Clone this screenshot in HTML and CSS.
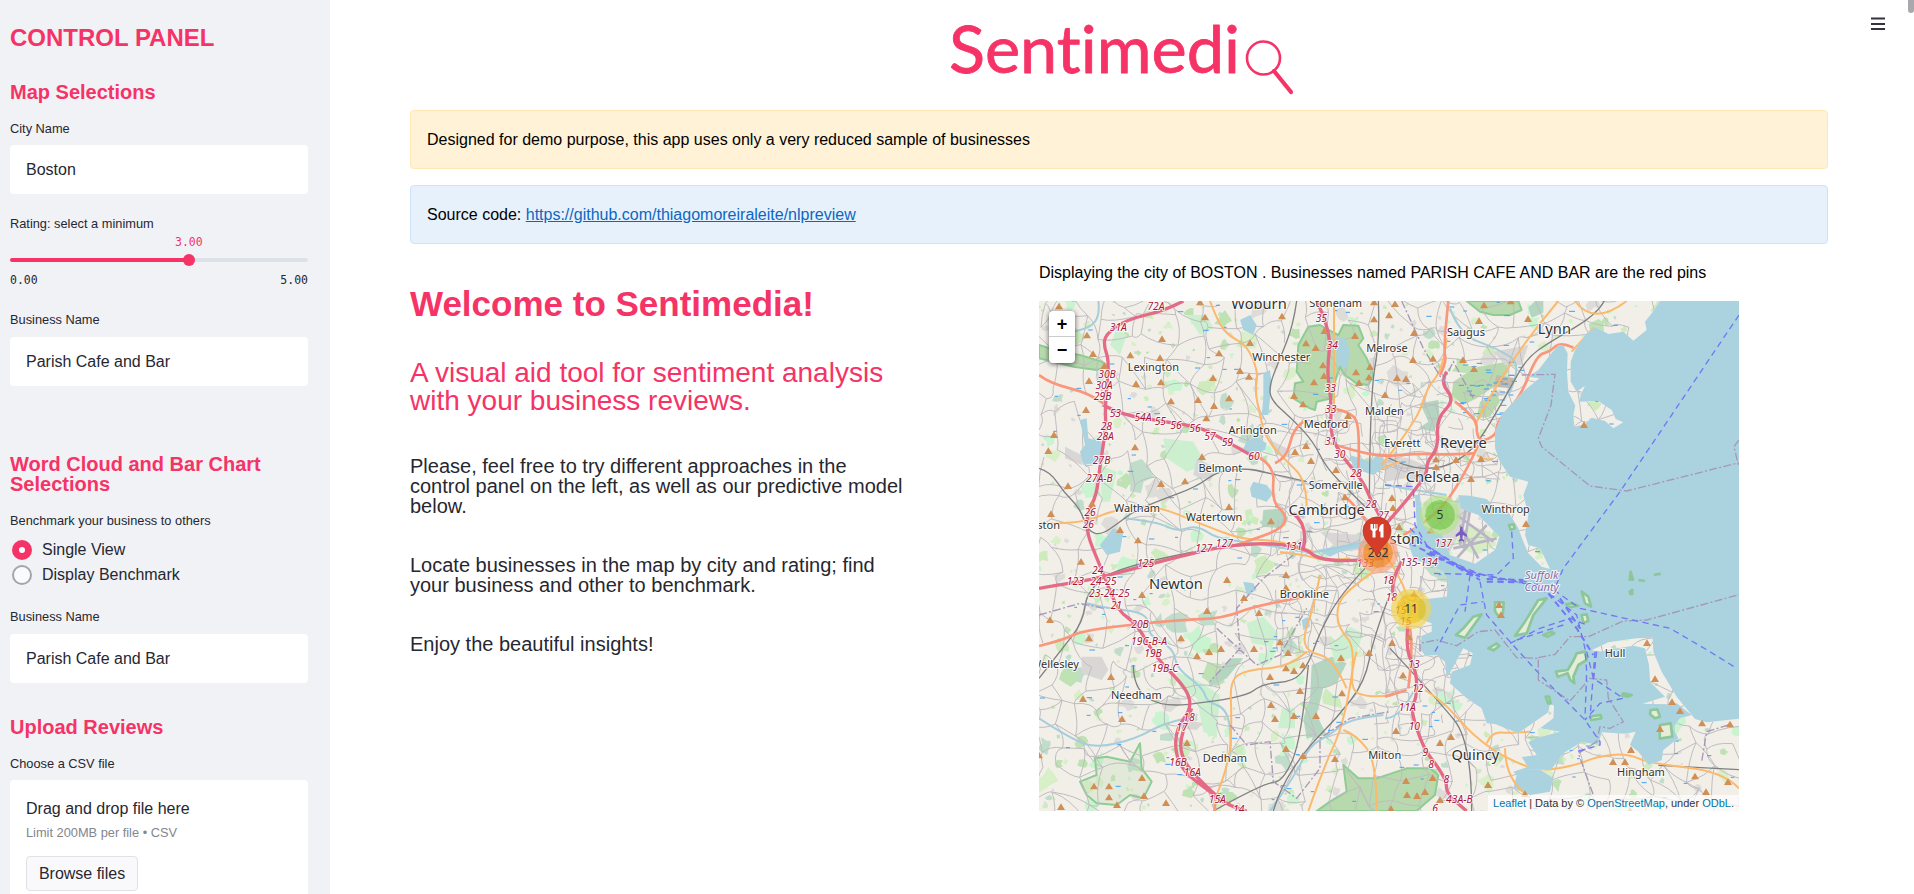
FILE: index.html
```html
<!DOCTYPE html>
<html lang="en">
<head>
<meta charset="utf-8">
<title>Sentimedia</title>
<link rel="stylesheet" href="styles.css">
</head>
<body>
<div class="app">
  <aside class="sidebar">
    <h1 class="panel-title">CONTROL PANEL</h1>
    <h3 class="section section-map">Map Selections</h3>
    <label class="label">City Name</label>
    <div class="select">Boston</div>
    <label class="label label-rating">Rating: select a minimum</label>
    <div class="slider">
      <div class="slider-value"><span>3.00</span></div>
      <div class="track"><div class="thumb"></div></div>
      <div class="ticks"><span>0.00</span><span>5.00</span></div>
    </div>
    <label class="label label-business">Business Name</label>
    <div class="select">Parish Cafe and Bar</div>
    <h3 class="section section-cloud">Word Cloud and Bar Chart Selections</h3>
    <label class="label">Benchmark your business to others</label>
    <div class="radios">
      <div class="radio"><i class="dot dot-on"></i>Single View</div>
      <div class="radio"><i class="dot"></i>Display Benchmark</div>
    </div>
    <label class="label label-other">Business Name</label>
    <div class="select">Parish Cafe and Bar</div>
    <h3 class="section section-upload">Upload Reviews</h3>
    <label class="label">Choose a CSV file</label>
    <div class="dropzone">
      <div class="drop-main">Drag and drop file here</div>
      <div class="drop-limit">Limit 200MB per file • CSV</div>
      <button class="browse">Browse files</button>
    </div>
  </aside>

  <main class="main">
    <div class="logo">
      <svg width="350" height="80" viewBox="0 0 350 80">
        <text class="logo-text" x="5" y="53" textLength="291" lengthAdjust="spacingAndGlyphs">Sentimedi</text>
        <circle cx="319.500" cy="38" r="16.500" fill="none" stroke="#f63366" stroke-width="2.600"/>
        <path d="M330 51l17 21" stroke="#f63366" stroke-width="4.200" stroke-linecap="round"/>
      </svg>
    </div>
    <div class="alert alert-warning">Designed for demo purpose, this app uses only a very reduced sample of businesses</div>
    <div class="alert alert-info">Source code:&nbsp;<a href="#">https://github.com/thiagomoreiraleite/nlpreview</a></div>
    <div class="columns">
      <section class="intro">
        <h1 class="welcome">Welcome to Sentimedia!</h1>
        <h2 class="tagline">A visual aid tool for sentiment analysis<br>with your business reviews.</h2>
        <p class="para">Please, feel free to try different approaches in the<br>control panel on the left, as well as our predictive model<br>below.</p>
        <p class="para">Locate businesses in the map by city and rating; find<br>your business and other to benchmark.</p>
        <p class="para">Enjoy the beautiful insights!</p>
      </section>
      <section class="map-col">
        <div class="map-caption">Displaying the city of BOSTON . Businesses named PARISH CAFE AND BAR are the red pins</div>
        <div class="map">
          <svg class="tiles" viewBox="27 18 2100 1530" width="700" height="510">
            <defs>
              <clipPath id="land-clip"><use href="#land"/></clipPath>
            </defs>
            <rect x="27" y="18" width="2100" height="1530" fill="#aad3df"/>
            <path id="land" fill="#f2efe9" d="M20 10H1895L1865 55 1845 80 1850 105 1810 137 1780 110 1735 117 1695 95 1665 120 1635 165 1622 200V260L1640 290 1665 272 1655 295 1645 320 1705 318 1745 345 1757 372 1780 382 1750 400 1725 378 1685 368 1665 388 1633 395 1630 360 1636 332 1615 290 1611 230 1613 175 1600 152 1585 150 1560 180 1525 225 1495 245 1528 250 1485 285 1450 320 1415 360 1395 410V460L1410 500 1440 545 1495 560 1480 600 1495 660 1485 720 1495 750 1530 760 1560 822 1535 815 1495 775 1478 735 1465 700 1435 650 1400 640 1370 612 1320 602 1285 600 1290 640 1345 660 1408 725 1395 765 1335 806 1260 780 1238 720 1180 690 1170 600 1155 600 1160 690 1130 730 1150 790 1240 830 1255 860 1250 905 1190 912 1165 912 1165 970 1205 985 1205 1010 1175 1022 1170 1060 1185 1082 1220 1080 1245 1100 1250 1150 1270 1115 1300 1060 1328 1075 1320 1110 1265 1130 1260 1165 1310 1210 1355 1240 1370 1285 1395 1287 1465 1315 1500 1290 1555 1252 1560 1226 1572 1232 1570 1270 1530 1300 1590 1310 1515 1330 1495 1342 1520 1380 1475 1386 1500 1425 1565 1422 1600 1375 1655 1341 1705 1350 1715 1312 1785 1316 1817 1310 1800 1350 1825 1370 1855 1410 1895 1396 1900 1365 1945 1330 1930 1300 1950 1270 1985 1260 1940 1225 1915 1228 1838 1226 1890 1210 1905 1205 1860 1160 1857 1110 1845 1060 1810 1052 1750 1062 1700 1072 1685 1066 1735 1042 1820 1030 1868 1028 1870 1070 1895 1130 1940 1205 1995 1272 2030 1282 2135 1270V1560H20Z"/>
            <g id="fabric" clip-path="url(#land-clip)">
              <g id="greens"></g>
              <!-- parks and woods -->
              <g fill="#b8d9ad" stroke="#8fcb95" stroke-width="6" stroke-linejoin="round">
                <path d="M835 95L870 90 905 110 925 120 940 90 985 92 1000 130 985 150 1010 190 1030 240 1015 270 980 265 945 240 930 215 915 260 905 310 860 320 855 345 840 340 790 310 795 265 820 260 800 230 805 150Z"/>
                <path d="M27 150L90 170 150 180 215 200 235 215 200 225 130 215 27 190Z"/>
                <path d="M1310 18H1465L1475 45 1440 60 1390 60 1350 50Z"/>
                <path stroke="none" d="M1270 260L1300 240 1345 215 1430 200 1435 230 1400 270 1340 310 1300 330 1265 300Z"/>
                <path stroke="none" d="M1350 320L1400 290 1410 320 1380 365 1340 370Z"/>
                <path fill-opacity=".25" d="M150 1460L200 1440 195 1390 230 1385 300 1400 330 1345 335 1420 365 1460 340 1510 300 1500 260 1530 200 1525 170 1500Z"/>
                <path d="M860 1548L900 1520 950 1490 940 1410 985 1450 1040 1450 1130 1420 1200 1420 1225 1440 1215 1500 1180 1530 1160 1548Z"/>
              </g>
              <g fill="#b4d5c0">
                <path d="M845 1110l60-25 45 20-30 60-40 15-20 80 30 60-60 10-10-60 20-60zM535 1160l70-70 35 0-50 60-50 25zM700 645l55-5 20 30-20 30-60-5zM1170 325l55-10 5 60-20 35-45-10 30-20zM1515 18h25l0 35-35 15-10-30z"/>
              </g>
              <g fill="#ccf0cf">
                <path d="M650 985l50-20 45 50-20 40-60-10zM900 1050l60-55 40 20-25 70-60 20zM755 1240l40 0 0 60-50 0zM260 100l30 20-20 60-30-30zM470 60l60 0 20 40-40 20zM400 430l90 10 40 70-60 20-60-40zM210 510l50 20-20 90-25 0zM440 1130l70 30 60 40-10 130-40-20-20-100-50-30zM1270 900l60 20 0 30-60-20z"/>
              </g>
              <g fill="#d9d7d6">
                <path d="M155 1085l60 0 20 40-20 30-60-20zM105 455l60 30-10 25-50-20zM500 490l60 30-20 40-50-20zM710 430l60 30 20 30-50-10zM1390 170l105-20-20 60-50 0zM1065 480l70 10 60 25-10 55-60-20-60 10zM870 710l120 10 60 40-120 10zM470 1275l50 10-20 20-50-5zM1180 620l80 0 60 30-60 120-50-40z"/>
                <path fill="#d8edc4" d="M1320 690l60 20 20 40-60 30-50-20zM1340 630l60 20-30 10z"/>
                <path fill="#c8b9a5" d="M1400 240l55 10-10 30-55-5z"/>
              </g>
              <g id="streets" fill="none" stroke="#bfbcc0" stroke-width="3"></g>
              <g id="marsh" stroke="#41a0f5" stroke-width="3"></g>
              <!-- lakes and rivers -->
              <g fill="#aad3df">
                <path d="M150 375l20-5 5 60 40 10 5 60-60 10-10-40 15-20zM630 75l30-15 20 30-10 30-30-15zM650 440l30-15 30 20-5 20-50 15-20-10zM660 580l10-20 40 10 20 25-20 25-45-15zM700 235l20-10 5 40-10 95-20 0 5-50zM905 130l40 0 15 40-10 50-30-10 0-40-25-10zM640 860l30 5 10 20-30 15zM815 975l20-10 5 30-20 10zM250 700l30 10-10 60-40 10-20-30zM1450 1430l60-20 60 40-10 40-60 10-50-20 10-40z"/>
                <path d="M960 480l60 20 30-30 20 40-40 30-60-20zM860 765l140-25 60-10 0 15-130 25-30 15z"/>
              </g>
              <g class="smooth" fill="none" stroke="#a5cddb" stroke-width="6" stroke-linejoin="round">
                <path d="M205 18L210 60 180 100 130 110M280 670L380 680 440 710 500 690 560 730 640 740 740 755 840 775 920 760 1050 730M27 1270L120 1330 200 1360 320 1330 400 1285 470 1270M170 925L230 940 330 950 360 980 355 1020 430 1060 440 1120 520 1180 530 1220 590 1240 605 1330 600 1400M720 1548L790 1450 840 1350 900 1320 960 1270 1060 1260M1260 40L1290 120 1400 160 1480 210 1435 300M1065 570L1180 590 1250 600M1065 1270L1110 1270 1150 1190"/>
              </g>
              <!-- railways -->
              <g class="smooth" fill="none" stroke="#808080" stroke-width="4">
                <path d="M800 18L790 90 750 190 718 270 722 315 790 375 850 440 890 520 960 590 1010 640M27 520L60 530 100 590 150 640 175 710 215 720 270 680 310 650 380 620 500 575 560 530 640 520 700 530 830 560M460 780L600 748 740 745M1723 18L1700 60 1560 140 1490 190 1440 280 1360 420 1310 480 1240 520 1130 520 1060 480"/>
                <path d="M490 771L260 815 170 890 160 980 90 1070 27 1150M310 1110V1246L640 1210 700 1165 790 1160 835 1110 870 1010 930 900 1005 820M1075 910L1030 1030 1005 1160 920 1270 830 1360 750 1480 730 1548M550 1548L700 1465 760 1460 815 1330 835 1110M1080 1060L1220 1210 1325 1340V1548M1885 1411L2127 1424M1045 18L1050 130 1020 300 1018 620"/>
              </g>
              <!-- secondary roads -->
              <g class="smooth" fill="none" stroke="#fcb96b" stroke-width="6" stroke-linejoin="round">
                <path d="M540 18L565 85 600 125 650 150 685 230 675 290 690 360 705 425 760 490 830 555V640M27 685L150 688 250 645 370 628 520 690 640 735 750 735 850 770M912 18V340M1055 510L1160 380 1190 280 1240 220 1250 130M1335 390L1430 200 1585 18M1635 18L1690 95 1790 18M1055 520L1110 500M1625 170L1690 98M1340 480L1370 500 1390 490"/>
                <path d="M750 771L830 780 890 800 960 790M1030 830L960 880 920 930 925 1000 980 1060 940 1290 880 1420 835 1548M980 1070L950 1180 1020 1210 1090 1200M870 840L850 940 820 1020 830 1070 910 1090 950 1180M830 1070L780 1115 650 1125 600 1155 605 1270 600 1400 560 1500M940 1305L980 1320 1040 1400V1548M1185 1185L1240 1220 1300 1290 1360 1345 1430 1390 1530 1430 1640 1410 1700 1385 1790 1375 1860 1405 2080 1430 2127 1480M1370 1345L1385 1310 1440 1315 1500 1310M1425 1360V1450L1490 1500M1065 780L1110 840 1130 900"/>
              </g>
              <g class="smooth" fill="none" stroke="#fa967a" stroke-width="8" stroke-linejoin="round">
                <path d="M27 240L60 265 180 295 220 325M670 480L735 505 725 620 770 660 760 700 650 740 620 750M735 505L770 490 790 400 820 380M905 340L965 350 990 400 985 520M900 445L980 470 1065 485 1170 475 1240 480 1330 475M1255 18L1240 160 1250 200 1230 240M1275 320L1340 370V420L1355 440 1400 420 1400 380 1470 310 1520 180 1560 170 1590 140 1630 158M1345 450L1280 590 1180 690 1120 720M940 600L1000 650 1060 760"/>
                <path d="M27 1053L100 1035 160 1005 440 975 580 970 680 930 830 905M1065 1205L1130 1185M1140 1000L1150 1060 1135 1180M555 1500V1548"/>
              </g>
              <!-- motorways -->
              <g class="smooth" fill="none" stroke="#e56a86" stroke-width="10" stroke-linejoin="round">
                <path d="M460 18L410 45 285 75 225 120 222 155 238 200 225 330 228 400 210 510 200 600 170 660 172 720 205 800 225 850 265 950 320 985 375 1085 470 1180 485 1240 440 1300 435 1370 460 1430 540 1490 600 1535 650 1548M220 330L270 360 440 385 520 400 600 445 680 490M27 880L150 860 220 845 500 771 620 748 740 745 830 762 860 790 950 800 1060 790M860 18L905 110 890 230 905 320 900 420 940 490 1000 560 1020 610 1070 700 1070 790M790 655L835 690 820 760M1250 230L1230 260 1275 315 1220 370 1225 460 1190 500 1190 550 1065 690M1135 970L1125 1060 1160 1130 1160 1210 1140 1240 1180 1360 1220 1410 1250 1460V1500L1310 1548M1115 800L1080 860 1090 900M485 1240L455 1310 450 1380 500 1450 580 1520"/>
              </g>
              <g fill="none" stroke="#b9b5c6" stroke-width="8"><path d="M1325 620L1300 760M1310 620L1290 750M1280 660L1390 740M1280 790L1370 690M1290 690L1345 790M1270 760L1400 730"/></g>
            </g>
            <!-- harbour islands -->
            <g fill="#e6ecd8" stroke="#8cc79a" stroke-width="8" stroke-linejoin="round">
              <path d="M1355 958L1330 965 1300 1000 1278 1020 1305 1028 1325 1000ZM1550 910L1525 915 1485 980 1455 1022 1490 1015 1510 960ZM1655 890L1665 925 1683 935 1675 905ZM1608 928l15 8 22-4-20-7zM1655 960l15-2 5 20-15 5zM1540 1020l25-10 8 5-20 10zM1375 1060l25-15 8 8-18 13zM1640 1075l25-5 5 25-25 15-15 35 3 20-12-10-8-20-30 10-5-15 35-5 18-30zM1395 922l26 0-2 32-12 12-12-17zM1780 1195l25 5-10 5-20-3zM1680 1265l32-5 2 10-30 5zM1547 1205l10 0 5 20-8 0zM1862 1245l20-2 8 22-15 5-15-12zM1890 1290l32-5 5 40-38 6zM1802 830l3 12 4 12-10 0zM1825 855l20 3M1872 840l20-4M1799 890l8-5 0 12-6 0zM1437 690l14-2 3 12-12 4z"/>
            </g>
            <g fill="none" stroke="#a796b8" stroke-width="4" stroke-dasharray="24 7 6 7">
              <path d="M1475 240L1575 238 1563 330 1525 430 1535 455 1680 573 1790 588 2127 503M2127 435L2112 455 2125 510"/>
              <path d="M1170 1070V1045L1220 1035 1280 1052 1345 1010 1395 1005 1460 1088 1525 1090V1155L1620 1218 1680 1150 1730 1155 1735 1210 1780 1280 1740 1300 1710 1295 1700 1340 1645 1375 1690 1500M1525 1088L1575 1078 1620 1025 1675 1025 1780 978 1850 975 2127 899"/>
              <path d="M1115 18L1180 160 1240 260 1270 200 1330 310M27 960L150 925 220 940M790 780L700 850 620 940 630 1060 540 1160M560 1000L680 1110 750 1080 830 940M600 1290L650 1350 720 1340 730 1460 800 1510 870 1420V1330L960 1270 1080 1250M2095 1290L2030 1310 2015 1400"/>
            </g>
            <g fill="none" stroke="#7277f5" stroke-width="4" stroke-dasharray="19 13">
              <path d="M2127 60L1770 590 1600 820 1570 890M1065 570L1150 575 1155 690 1190 750 1260 800 1370 845 1490 860 1570 905 1640 960 1665 1060 1670 1130 1665 1270M1140 700L1210 770 1320 830 1480 865M1350 860L1370 960 1440 1040 1540 1150 1665 1275 1710 1340V1350L1640 1370M1480 865L1550 870 1650 940 1920 1000 2040 1070 2120 1120M1215 1070L1290 930 1360 920M1320 840L1305 950M1440 1045L1530 1000 1620 970 1670 990M1460 1035L1600 990M1670 1070L1690 1150 1780 1210 1710 1225 1665 1275M1445 710L1450 790 1400 840 1200 835M1700 1070L1690 1160M1695 1070L1680 1270"/>
              <path stroke-width="6" d="M1140 745L1300 825M1160 735L1330 840M1190 775L1350 845M1370 852L1480 855M1370 860L1480 862M1555 895L1640 1000 1690 1080M1590 910L1650 1000M1200 770L1350 855"/>
            </g>
            <path d="M1291 695h6l2 14 12 10v7l-13-6-1 11 5 5v4l-8-3-8 3v-4l5-5-1-11-13 6v-7l12-10z" fill="#7a5cc0"/>
            <g id="peaks" fill="#d08f55"></g>
            <g class="town">
              <text x="370" y="227">Lexington</text><text x="754" y="197">Winchester</text><text x="668" y="416">Arlington</text><text x="571" y="530">Belmont</text><text x="888" y="398">Medford</text><text x="917" y="581">Somerville</text><text x="321" y="650">Waltham</text><text x="552" y="678">Watertown</text><text x="917" y="35">Stoneham</text><text x="1071" y="172">Melrose</text><text x="1063" y="359">Malden</text><text x="1308" y="124">Saugus</text><text x="1117" y="457">Everett</text><text x="1427" y="655">Winthrop</text><text x="56" y="703">ston</text><text x="823" y="910">Brookline</text><text x="75" y="1120">Wellesley</text><text x="319" y="1213">Needham</text><text x="585" y="1400">Dedham</text><text x="1064" y="1391">Milton</text><text x="1755" y="1085">Hull</text><text x="1833" y="1442">Hingham</text>
            </g>
            <g class="city">
              <text x="687" y="42">Woburn</text><text x="1573" y="117">Lynn</text><text x="1300" y="460">Revere</text><text x="1208" y="560">Chelsea</text><text x="890" y="660">Cambridge</text><text x="1124" y="746">ston</text><text x="438" y="882">Newton</text><text x="1336" y="1396">Quincy</text>
            </g>
            <g class="exit" id="exits"></g>
            <g class="county"><text x="1535" y="852">Suffolk</text><text x="1535" y="887">County</text></g>
          </svg>
          <div class="zoom"><span>+</span><span>−</span></div>
          <div class="cluster green">5</div>
          <div class="cluster yellow">11</div>
          <div class="cluster orange">262</div>
          <svg class="pin" width="30" height="42" viewBox="0 0 30 42">
            <path d="M15 40C11 30 1 25 1 15A14 14 0 0 1 29 15C29 25 19 30 15 40Z" fill="#d33d2a" stroke="#b83222" stroke-width=".8"/>
            <path d="M8.500 8v5.500l2 1.500V21.500h3V15l2-1.500V8h-1v4.500h-1V8h-1.600v4.500h-1V8zM21.500 8c-3 0-4.500 2-4.500 7.500h1.500v6h3z" fill="#fff"/>
          </svg>
          <div class="credit"><a>Leaflet</a> | Data by © <a>OpenStreetMap</a>, under <a>ODbL</a>.</div>
        </div>
      </section>
    </div>
    <svg class="menu" width="14" height="14" viewBox="0 0 14 14"><path d="M0 1.500h14M0 7h14M0 12h14" stroke="#35333f" stroke-width="1.800"/></svg>
    <div class="scroll-thumb"></div>
  </main>
</div>
<script src="map.js"></script>
</body>
</html>
```

FILE: styles.css
```css
* { box-sizing: border-box; }
body { margin: 0; font-family: "Liberation Sans", Arial, sans-serif; font-size: 16px; color: #262730; background: #fff; }
h1, h2, h3, p { margin: 0; }
.app { display: flex; height: 894px; overflow: hidden; }

.sidebar { width: 330px; flex: none; height: 894px; overflow: hidden; background: #f0f2f6; padding: 26px 22px 0 10px; display: flex; flex-direction: column; }
.sidebar > * { flex: none; }
.panel-title { font-size: 24px; line-height: 24px; color: #f63366; }
.section { font-size: 20px; line-height: 20px; color: #f63366; margin-bottom: 17px; }
.section-map { margin-top: 32px; }
.section-cloud { margin-top: 68px; }
.section-upload { margin-top: 34px; }
.label { font-size: 12.8px; line-height: 20px; height: 20px; margin-bottom: 7px; }
.section + .label { margin-bottom: 6px; }
.label-rating { margin-top: 20px; margin-bottom: 0; }
.label-business { margin-top: 22px; }
.label-other { margin-top: 20px; }
.select { height: 49px; border-radius: 4px; background: #fff; padding: 0 16px; line-height: 49px; }
.slider { height: 54px; font-family: "DejaVu Sans Mono", monospace; font-size: 11.5px; line-height: 14px; display: flex; flex-direction: column; }
.slider-value { padding-left: 165px; height: 24px; padding-top: 1px; color: #f63366; }
.track { height: 4px; border-radius: 2px; background: linear-gradient(to right, #f63366 60%, #dde2e9 60%); display: flex; align-items: center; padding-left: 173px; }
.thumb { width: 12px; height: 12px; border-radius: 50%; background: #f63366; flex: none; }
.ticks { display: flex; justify-content: space-between; margin-top: 11px; }
.radios { display: flex; flex-direction: column; padding-left: 2px; }
.radio { display: flex; align-items: center; gap: 10px; height: 25px; }
.dot { width: 20px; height: 20px; border-radius: 50%; border: 2px solid #a3a5ac; background: #fafafc; }
.dot-on { border: 7px solid #f63366; background: #fff; }
.dropzone { height: 140px; background: #fff; border-radius: 4px; padding: 16px; display: flex; flex-direction: column; align-items: flex-start; }
.drop-main { line-height: 25px; }
.drop-limit { font-size: 12.8px; line-height: 20px; color: #84868e; margin-top: 2px; }
.browse { margin-top: 13px; width: 112px; height: 35px; border: 1px solid #e0e1e5; border-radius: 4px; background: #f9f9fb; font: inherit; color: inherit; padding: 0; }

.main { flex: 1; position: relative; padding: 20px 86px 0 80px; }
.logo { height: 90px; display: flex; justify-content: center; padding-right: 1px; }
.logo-text { font-family: Lato, sans-serif; font-size: 66px; font-variant-ligatures: none; fill: #f63366; stroke: #f63366; stroke-width: .8px; stroke-linejoin: round; }
.alert { height: 59px; border: 1px solid; border-radius: 4px; padding: 0 16px; display: flex; align-items: center; color: #000; margin-bottom: 16px; }
.alert-warning { background: #fff2d6; border-color: #ffe8b3; }
.alert-info { background: #e7f1fc; border-color: #cfe3f8; }
.alert a { color: #0b67c2; }
.columns { display: flex; }
.intro { width: 629px; padding-top: 26px; }
.welcome { font-size: 35px; line-height: 35px; color: #f63366; }
.tagline { font-size: 28px; line-height: 28px; font-weight: 400; color: #f63366; margin-top: 38px; margin-bottom: 41px; }
.para { font-size: 20px; line-height: 20px; margin-bottom: 39px; white-space: nowrap; }
.map-col { width: 700px; }
.map-caption { height: 41px; line-height: 26px; color: #000; white-space: nowrap; }
.map { position: relative; width: 700px; height: 510px; overflow: hidden; }
.tiles { display: block; }
.tiles text { font-family: "Noto Sans", sans-serif; text-anchor: middle; paint-order: stroke; stroke: #fff; stroke-opacity: .8; stroke-width: 6px; stroke-linejoin: round; fill: #333; }
.tiles .town text { font-size: 33px; }
.tiles .city text { font-size: 44px; }
.tiles .exit text { font-size: 31px; font-style: italic; fill: #a8163a; }
.tiles .county text { font-size: 33px; font-style: italic; fill: #8b6aa6; }

.zoom { position: absolute; left: 10px; top: 10px; width: 26px; height: 52px; border-radius: 4px; background: #fff; box-shadow: 0 1px 5px rgba(0,0,0,.65); color: #000; font: bold 18px/26px "Liberation Sans", sans-serif; text-align: center; }
.zoom span { display: block; height: 26px; }
.zoom span:first-child { border-bottom: 1px solid #ccc; }
.cluster { position: absolute; width: 40px; height: 40px; border-radius: 50%; border: 5px solid; background-clip: padding-box; font: 12px/30px "Noto Sans", sans-serif; text-align: center; color: #333; }
.green { left: 381px; top: 194px; background-color: rgba(110,204,57,.7); border-color: rgba(181,226,140,.7); }
.yellow { left: 352px; top: 288px; background-color: rgba(240,194,12,.75); border-color: rgba(241,211,87,.7); }
.orange { left: 319px; top: 232px; background-color: rgba(241,128,23,.75); border-color: rgba(253,156,115,.65); }
.pin { position: absolute; left: 323px; top: 215px; }
.credit { position: absolute; right: 0; bottom: 0; height: 16px; padding: 0 5px; background: rgba(255,255,255,.7); font-size: 11px; line-height: 16px; color: #333; white-space: nowrap; }
.credit a { color: #0078a8; }
.menu { position: absolute; left: 1541px; top: 17px; }
.scroll-thumb { position: absolute; right: 0; top: -6px; width: 6px; height: 19px; border-radius: 3px; background: #a8a8ad; }
```

FILE: map.js
```js
const NS = 'http://www.w3.org/2000/svg';
let seed = 42;
const rnd = () => (seed = (seed * 16807) % 2147483647) / 2147483647;
const byId = id => document.getElementById(id);
function addPath(parent, d, attrs) {
  const p = document.createElementNS(NS, 'path');
  p.setAttribute('d', d);
  for (const k in attrs || {}) p.setAttribute(k, attrs[k]);
  byId(parent).appendChild(p);
}

// Rounds the corners of open polylines written with absolute M, L, H and V.
function smooth(d) {
  return d.split('M').filter(Boolean).map(part => {
    const pts = [];
    for (const m of part.matchAll(/([HV])\s*([\d.]+)|([\d.]+)[ ,]+([\d.]+)/g)) {
      const last = pts[pts.length - 1];
      if (m[1] === 'H') pts.push([+m[2], last[1]]);
      else if (m[1] === 'V') pts.push([last[0], +m[2]]);
      else pts.push([+m[3], +m[4]]);
    }
    let out = 'M' + pts[0];
    for (let i = 1; i < pts.length - 1; i++) {
      const n = pts[i + 1];
      out += 'Q' + pts[i] + ' ' + (i === pts.length - 2 ? n : [(pts[i][0] + n[0]) / 2, (pts[i][1] + n[1]) / 2]);
    }
    return pts.length === 2 ? out + 'L' + pts[1] : out;
  }).join('');
}
document.querySelectorAll('.smooth path').forEach(p => p.setAttribute('d', smooth(p.getAttribute('d'))));

// Small patches of wood, park and built-up ground.
const tints = ['#cdebbd', '#c8f5cf', '#d8efc8', '#dedcd9', '#bfe2b4', '#c0dccb'];
for (let i = 0; i < 1100; i++) {
  const x = 27 + rnd() * 2100, y = 18 + rnd() * 1530;
  const s = 5 + rnd() * rnd() * rnd() * 55;
  const pts = [];
  for (let k = 0; k < 9; k++) {
    const a = k * Math.PI / 4.5, r = s * (0.4 + rnd() * 0.8);
    pts.push((x + Math.cos(a) * r).toFixed(0) + ' ' + (y + Math.sin(a) * r).toFixed(0));
  }
  addPath('greens', 'M' + pts.join('L') + 'Z', { fill: tints[Math.floor(rnd() * 6)] });
}

// Local streets: a jittered mesh whose neighbours are joined by bent lines.
function mesh(x0, y0, x1, y1, step, keep, jitter) {
  const cols = Math.ceil((x1 - x0) / step) + 1, rows = Math.ceil((y1 - y0) / step) + 1;
  const pt = [];
  for (let j = 0; j < rows; j++) {
    pt.push([]);
    for (let i = 0; i < cols; i++) {
      pt[j].push([x0 + i * step + (rnd() - 0.5) * step * jitter, y0 + j * step + (rnd() - 0.5) * step * jitter]);
    }
  }
  let d = '';
  const join = (a, b) => {
    if (rnd() > keep) return;
    const mx = (a[0] + b[0]) / 2 + (rnd() - 0.5) * step * 0.6, my = (a[1] + b[1]) / 2 + (rnd() - 0.5) * step * 0.6;
    d += 'M' + a.map(Math.round) + 'Q' + [mx, my].map(Math.round) + ' ' + b.map(Math.round);
  };
  for (let j = 0; j < rows; j++) for (let i = 0; i < cols; i++) {
    if (i + 1 < cols) join(pt[j][i], pt[j][i + 1]);
    if (j + 1 < rows) join(pt[j][i], pt[j + 1][i]);
    if (i + 1 < cols && j + 1 < rows && rnd() < 0.15) join(pt[j][i], pt[j + 1][i + 1]);
  }
  addPath('streets', d);
}
mesh(20, 10, 2130, 1550, 68, 0.8, 0.9);
mesh(740, 380, 1240, 1060, 36, 0.5, 0.5);
mesh(1040, 260, 1400, 560, 36, 0.5, 0.5);
mesh(1040, 1050, 1320, 1300, 34, 0.5, 0.5);

// Marsh ticks.
let ticks = '';
for (let i = 0; i < 230; i++) {
  const x = Math.round(27 + rnd() * 2100), y = Math.round(18 + rnd() * 1530);
  ticks += `M${x} ${y}h${8 + Math.round(rnd() * 10)}`;
}
for (let i = 0; i < 36; i++) ticks += `M${Math.round(1275 + rnd() * 170)} ${Math.round(200 + rnd() * 160)}h16`;
addPath('marsh', ticks);

const peaks = [
  [87,33],[171,120],[189,176],[223,212],[177,257],[168,344],[72,419],[55,467],[114,572],[63,656],[186,625],[270,704],[324,735],
  [396,131],[301,180],[390,188],[393,261],[318,266],[423,318],[504,314],[552,332],[529,369],[549,248],[597,309],[567,174],[525,66],
  [510,21],[630,227],[657,244],[660,143],[756,63],[883,107],[828,144],[857,158],[879,210],[882,242],[852,261],[792,302],[819,327],
  [975,122],[1020,215],[978,231],[1017,246],[987,263],[1032,21],[1032,72],[1065,299],[954,362],[828,452],[795,470],[843,497],
  [918,524],[945,606],[723,678],[597,635],[516,485],[465,558],[393,566],[315,456],
  [1095,26],[1077,60],[1152,113],[1149,194],[1209,190],[1299,194],[1332,221],[1101,248],[1128,251],[1362,30],[1347,77],[1494,71],
  [1442,18],[1662,389],[1218,492],[1218,516],[1278,494],[1353,491],[1323,551],[1086,608],[1089,638],[1107,695],[1203,705],[1488,686],
  [153,799],[336,899],[60,974],[177,1029],[243,1145],[159,1211],[276,1271],[336,1448],[192,1473],[237,1473],[237,1506],[261,1529],
  [342,1502],[408,1523],[93,1535],[27,1380],[471,1343],[453,1029],[501,1082],[537,1070],[573,1061],[531,947],[591,854],[642,908],
  [687,953],[768,839],[768,878],[672,1061],[750,1041],[774,1073],[768,1119],[792,1127],[819,1110],[720,1145],[810,1187],[723,1229],
  [735,1271],[792,1262],[858,1262],[936,1194],[933,1088],[1017,1073],[768,1361],[819,1382],[915,1391],
  [1152,895],[1086,1043],[1137,1026],[1119,1140],[1098,1307],[1230,1343],[1263,1325],[1128,1457],[1131,1499],[1161,1502],[1185,1490],
  [1208,1448],[1230,1514],[1083,1541],[1374,1469],[1485,1496],[1407,929],[1413,959],[1851,1043],[1875,1151],[1926,1220],[1950,1247],
  [2016,1284],[2100,1287],[1890,1301],[1803,1364],[1785,1400],[1749,1400],[1995,1443],[2094,1460],[2028,1490],[1800,1546]
];
addPath('peaks', peaks.map(([x, y]) => `M${x - 12} ${y + 10}L${x} ${y - 10}L${x + 12} ${y + 10}Z`).join(''));

const exits = [
  [378,45,'72A'],[265,108,'31A'],[231,249,'30B'],[222,282,'30A'],[218,315,'29B'],[256,366,'53'],[339,378,'54A'],[391,390,'55'],
  [438,402,'56'],[495,412,'56'],[540,434,'57'],[592,453,'59'],[672,494,'60'],[229,404,'28'],[226,435,'28A'],[215,507,'27B'],
  [208,560,'27A-B'],[180,662,'26'],[175,700,'26'],[521,770,'127'],[583,755,'127'],[791,765,'131'],[874,80,'35'],[907,163,'34'],
  [901,290,'33'],[902,353,'33'],[902,450,'31'],[929,489,'30'],[978,546,'28'],[1023,640,'28'],[1060,671,'27'],[1240,757,'137'],
  [347,816,'125'],[203,836,'24'],[136,870,'123'],[220,869,'24-25'],[238,907,'23-24-25'],[259,943,'21'],[330,999,'20B'],
  [357,1050,'19C-B-A'],[369,1087,'19B'],[405,1132,'19B-C'],[477,1278,'18'],[456,1308,'17'],[444,1413,'16B'],[487,1443,'16A'],
  [562,1525,'15A'],[626,1555,'14'],[1006,817,'133'],[1167,814,'135-134'],[1075,866,'18'],[1084,917,'18'],[1112,957,'15'],
  [1127,990,'15'],[1152,1120,'13'],[1163,1190,'12'],[1132,1249,'11A'],[1153,1305,'10'],[1186,1383,'9'],[1203,1420,'8'],
  [1249,1465,'8'],[1288,1525,'43A-B'],[1215,1552,'6']
];
for (const [x, y, s] of exits) {
  const t = document.createElementNS(NS, 'text');
  t.setAttribute('x', x);
  t.setAttribute('y', y);
  t.textContent = s;
  byId('exits').appendChild(t);
}
```
